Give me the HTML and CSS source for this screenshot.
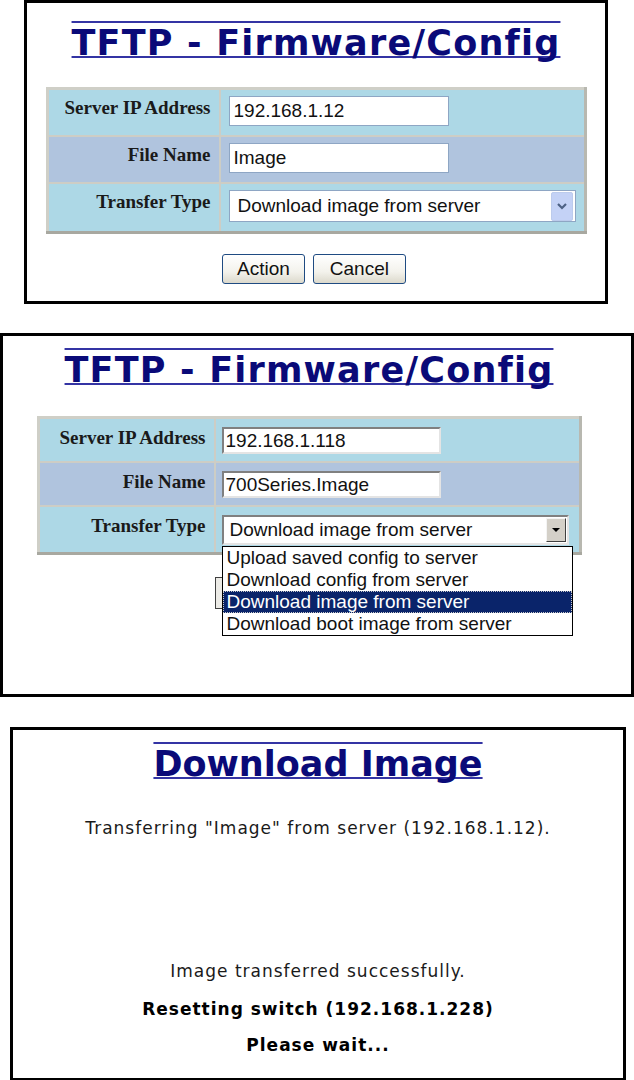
FILE: index.html
```html
<!DOCTYPE html>
<html lang="en">
<head>
  <meta charset="UTF-8" />
  <title>TFTP - Firmware/Config</title>
  <link rel="stylesheet" href="styles.css">
</head>
<body>
  <!-- step 1: the form -->
  <div class="panel panel-one">
    <h1 class="title"><span>TFTP - Firmware/Config</span></h1>
    <table class="cfg">
      <tr class="row-a">
        <th>Server IP Address</th>
        <td><input class="field" type="text" value="192.168.1.12"></td>
      </tr>
      <tr class="row-b">
        <th>File Name</th>
        <td><input class="field" type="text" value="Image"></td>
      </tr>
      <tr class="row-a">
        <th>Transfer Type</th>
        <td>
          <div class="select">
            <span class="select-text">Download image from server</span>
            <span class="arrow">
              <svg width="10" height="8" viewBox="0 0 10 8"><path d="M1 2 L5 6 L9 2" fill="none" stroke="#4d6185" stroke-width="2.2"/></svg>
            </span>
          </div>
        </td>
      </tr>
    </table>
    <div class="actions">
      <button class="btn">Action</button>
      <button class="btn btn-wide">Cancel</button>
    </div>
  </div>

  <!-- step 2: picking the transfer type -->
  <div class="panel panel-two">
    <h1 class="title"><span>TFTP - Firmware/Config</span></h1>
    <table class="cfg classic">
      <tr class="row-a">
        <th>Server IP Address</th>
        <td><input class="field" type="text" value="192.168.1.118"></td>
      </tr>
      <tr class="row-b">
        <th>File Name</th>
        <td><input class="field" type="text" value="700Series.Image"></td>
      </tr>
      <tr class="row-a">
        <th>Transfer Type</th>
        <td>
          <div class="select">
            <span class="select-text">Download image from server</span>
            <span class="arrow">
              <svg width="8" height="5" viewBox="0 0 8 5"><path d="M0 0 H8 L4 4 Z" fill="#000"/></svg>
            </span>
            <ul class="options">
              <li>Upload saved config to server</li>
              <li>Download config from server</li>
              <li class="picked">Download image from server</li>
              <li>Download boot image from server</li>
            </ul>
          </div>
        </td>
      </tr>
    </table>
    <div class="actions">
      <button class="btn">Action</button>
      <button class="btn btn-wide">Cancel</button>
    </div>
  </div>

  <!-- step 3: result -->
  <div class="panel panel-three">
    <h1 class="title"><span>Download Image</span></h1>
    <p class="msg first">Transferring "Image" from server (192.168.1.12).</p>
    <p class="msg done">Image transferred successfully.</p>
    <p class="msg strong">Resetting switch (192.168.1.228)</p>
    <p class="msg strong">Please wait...</p>
  </div>
</body>
</html>
```

FILE: styles.css
```css
body { margin: 0; background: #fff; font-family: "DejaVu Sans", Verdana, sans-serif; }

.panel { border: 3px solid #000; background: #fff; box-sizing: border-box; }
.panel-one { margin-left: 24px; width: 584px; height: 304px; }
.panel-two { margin-top: 29px; width: 634px; height: 364px; padding-right: 16px; }
.panel-three { margin-top: 30px; margin-left: 10px; width: 616px; height: 354px; }

.title {
  margin: 0;
  padding-top: 20px;
  text-align: center;
  font: bold 35px "DejaVu Sans", Verdana, sans-serif;
  letter-spacing: 1.2px;
  color: #0a0a78;
}
.title span {
  text-decoration: underline overline;
  text-decoration-color: #3434a4;
  text-decoration-thickness: 2px;
  text-decoration-skip-ink: none;
}
.panel-two .title { padding-top: 14px; }
.panel-three .title { padding-top: 14px; letter-spacing: 0; }

.cfg {
  margin: 24px auto 0;
  width: 541px;
  border-collapse: collapse;
  border: 3px solid #cfcfc7;
  border-bottom-color: #a8a8a0;
  border-right-color: #b8b8b0;
}
.cfg th, .cfg td { border: 2px solid #cdcdc5; }
.cfg th {
  width: 154px;
  padding: 7px 8px 0;
  text-align: right;
  vertical-align: top;
  font: bold 19px "Liberation Serif", "Times New Roman", serif;
  color: #1a1a1a;
  white-space: nowrap;
}
.cfg td { padding: 6px 8px 9px; }
.row-a { background: #add8e6; }
.row-b { background: #b0c4de; }

.field {
  display: block;
  width: 220px;
  height: 30px;
  box-sizing: border-box;
  border: 1px solid #8ea6c4;
  padding: 0 4px;
  font: 19px "Liberation Sans", Arial, sans-serif;
  color: #111;
  background: #fff;
}

.select {
  position: relative;
  display: flex;
  align-items: center;
  width: 347px;
  height: 32px;
  box-sizing: border-box;
  border: 1px solid #8ea6c4;
  background: #fff;
  font: 19px "Liberation Sans", Arial, sans-serif;
  color: #111;
}
.select-text { flex: 1; padding-left: 8px; }
.arrow {
  display: flex;
  align-items: center;
  justify-content: center;
  width: 20px;
  height: 27px;
  margin-right: 2px;
  border: 1px solid #bccbec;
  border-radius: 2px;
  background: #c4d2f6;
}

.actions { display: flex; justify-content: center; gap: 8px; margin-top: 20px; padding-right: 4px; }
.btn {
  height: 30px;
  padding: 0 14px;
  border: 1px solid #1f4b82;
  border-radius: 3px;
  background: linear-gradient(#fff, #f3f2ec 60%, #dcd9cc);
  font: 19px "Liberation Sans", Arial, sans-serif;
  color: #111;
}
.btn-wide { padding: 0 16px; }

/* classic windows look in the second shot */
.classic { margin-top: 26px; width: 545px; }
.classic th { width: 158px; padding-top: 8px; }
.classic td { padding: 8px 6px 7px; }
.classic .field {
  width: 219px;
  height: 27px;
  border: 2px solid;
  border-color: #808080 #e4e4e4 #e4e4e4 #808080;
  padding: 0 2px;
}
.classic .select {
  height: 30px;
  border: 2px solid;
  border-color: #808080 #e4e4e4 #e4e4e4 #808080;
}
.classic .select-text { padding-left: 6px; }
.classic .arrow {
  width: 18px;
  height: 22px;
  margin-right: 1px;
  border: 1px solid;
  border-color: #f4f4f4 #404040 #404040 #f4f4f4;
  border-radius: 0;
  background: #d4d0c8;
}
.options {
  position: absolute;
  left: -2px;
  top: 29px;
  width: 349px;
  margin: 0;
  padding: 0;
  list-style: none;
  border: 1px solid #000;
  background: #fff;
  z-index: 2;
}
.options li { height: 22px; line-height: 21px; padding-left: 4px; }
.options .picked {
  background: #0a246a;
  color: #fff;
  outline: 1px dotted #c9c9c9;
  outline-offset: -1px;
}
.panel-two .actions { margin-top: 22px; padding-right: 5px; }
.panel-two .btn { height: 32px; border-color: #404040; border-radius: 0; background: #ecebe6; }

.msg { margin: 0; text-align: center; font-size: 17px; letter-spacing: 1px; color: #1a1a1a; }
.first { margin-top: 34px; }
.done { margin-top: 123px; }
.strong { margin-top: 18px; font-weight: bold; color: #000; }
.strong + .strong { margin-top: 16px; }
```
